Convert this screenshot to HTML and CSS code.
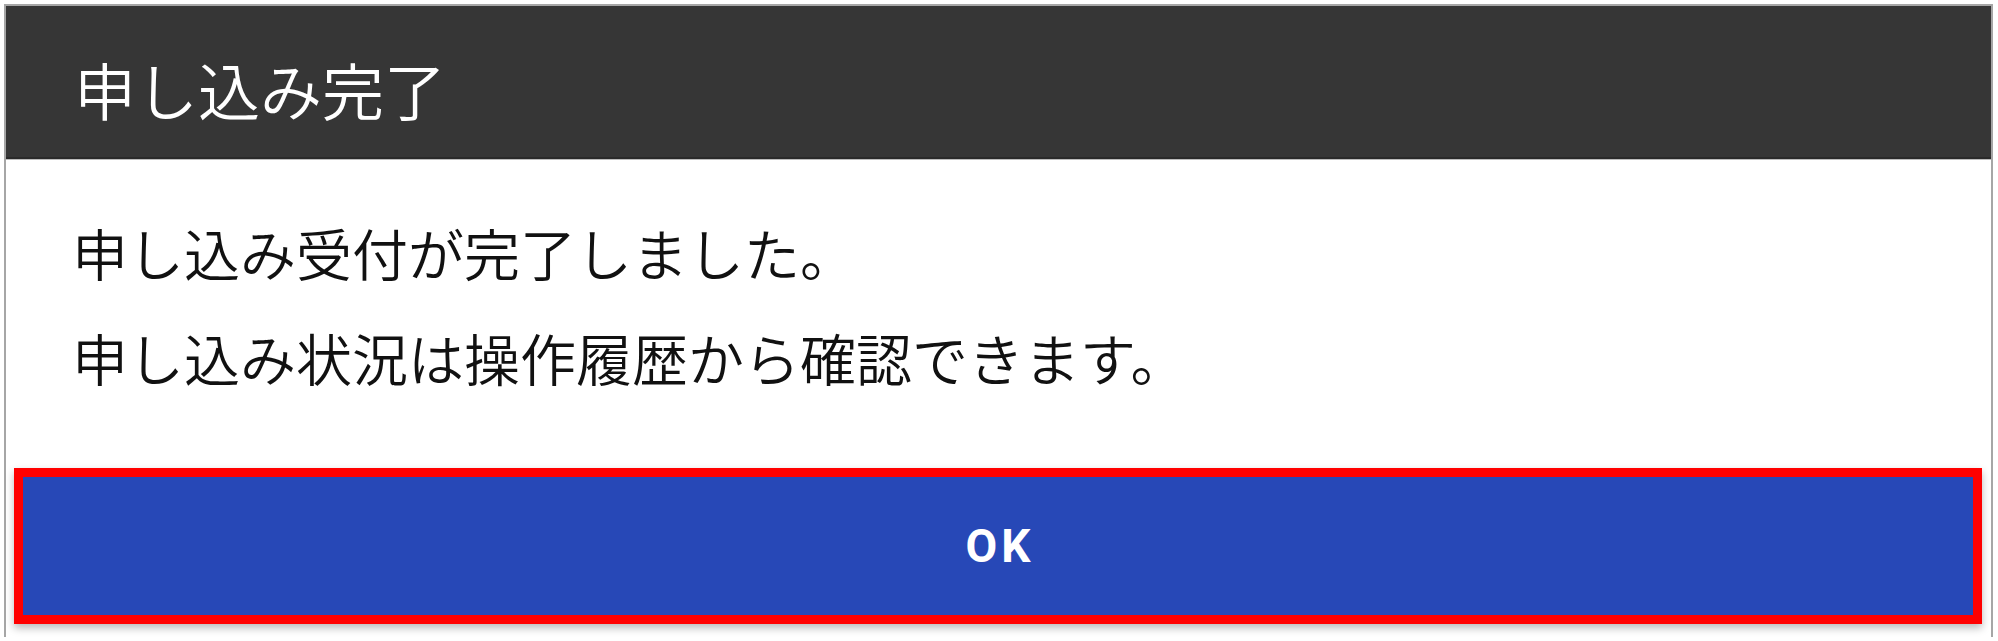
FILE: index.html
```html
<!DOCTYPE html>
<html lang="ja">
<head>
<meta charset="utf-8">
<title>申し込み完了</title>
<link rel="stylesheet" href="styles.css">
</head>
<body>
<div class="dialog">
  <div class="dialog-header">
    <h1 class="dialog-title">申し込み完了</h1>
  </div>
  <div class="dialog-body">
    <p class="message">申し込み受付が完了しました。</p>
    <p class="message">申し込み状況は操作履歴から確認できます。</p>
  </div>
  <div class="dialog-actions">
    <div class="highlight">
      <button class="ok-button" type="button">OK</button>
    </div>
  </div>
</div>
</body>
</html>
```

FILE: styles.css
```css
html, body {
  margin: 0;
  padding: 0;
  background: #ffffff;
}

body {
  font-family: "Noto Sans CJK JP", "Noto Sans", sans-serif;
}

.dialog {
  box-sizing: border-box;
  margin: 4px 0 0 4px;
  width: 1989px;
  height: 633px;
  border: 2px solid #a6a6a6;
  border-bottom: none;
  background: #ffffff;
  display: flex;
  flex-direction: column;
}

.dialog-header {
  background: #363636;
  padding: 38px 68px 23px;
  border-bottom: 2px solid #2a2a2a;
}

.dialog-title {
  margin: 0;
  font-size: 62px;
  line-height: 90px;
  font-weight: 350;
  color: #ffffff;
}

.dialog-body {
  border-top: 1px solid #bdbdbd;
  padding: 50px 66px 0;
  display: flex;
  flex-direction: column;
  gap: 21px;
}

.message {
  margin: 0;
  font-size: 56px;
  line-height: 84px;
  font-weight: 350;
  color: #111111;
}

.dialog-actions {
  padding: 69px 9px 0 8px;
}

.highlight {
  border: 9px solid #ff0000;
  box-shadow: 0 4px 8px rgba(0, 0, 0, 0.28);
}

.ok-button {
  display: block;
  width: 100%;
  height: 138px;
  margin: 0;
  padding: 0;
  border: none;
  background: #2748b7;
  color: #ffffff;
  font-family: Roboto, "Noto Sans", sans-serif;
  font-weight: 700;
  font-size: 46px;
  letter-spacing: 0.09em;
  text-indent: 0.09em;
  cursor: pointer;
}
```
